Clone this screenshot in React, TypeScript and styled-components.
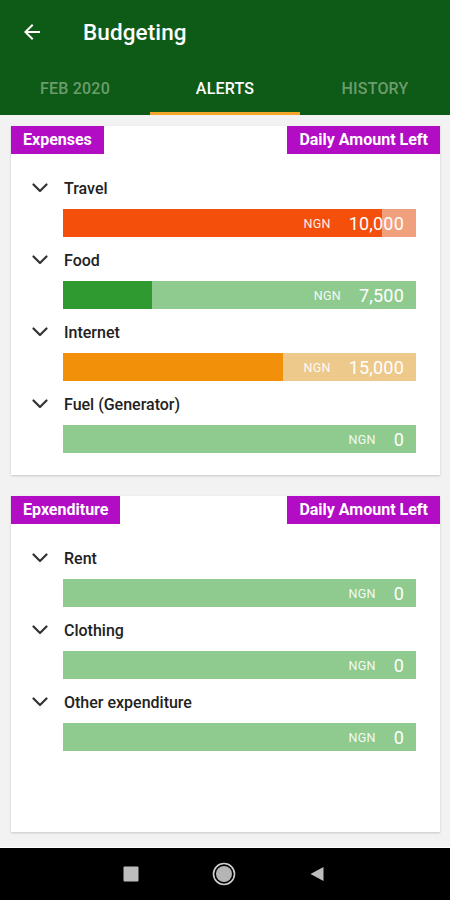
import React from "react";
import styled, { createGlobalStyle } from "styled-components";

const Global = createGlobalStyle`
  html, body { margin: 0; padding: 0; }
  body {
    background: #f2f2f2;
    font-family: Roboto, "Noto Sans", "Liberation Sans", sans-serif;
    -webkit-font-smoothing: antialiased;
  }
`;

const Screen = styled.div`
  display: flex;
  flex-direction: column;
  width: 450px;
  height: 900px;
  background: #f2f2f2;
  overflow: hidden;
`;

const AppBar = styled.header`
  background: #0e5a17;
  display: flex;
  flex-direction: column;
`;

const Toolbar = styled.div`
  height: 64px;
  display: flex;
  align-items: center;
  padding-left: 20px;
  gap: 39px;
`;

const Title = styled.h1`
  margin: 0;
  color: #ffffff;
  font-size: 22.5px;
  font-weight: 500;
  letter-spacing: 0.1px;
`;

const Tabs = styled.nav`
  display: grid;
  grid-template-columns: repeat(3, 1fr);
`;

const Tab = styled.div<{ $active?: boolean }>`
  height: 48px;
  display: flex;
  align-items: center;
  justify-content: center;
  font-size: 16px;
  font-weight: 500;
  letter-spacing: 0.2px;
  color: ${(p) => (p.$active ? "#ffffff" : "#6b9d6c")};
  border-bottom: 3px solid ${(p) => (p.$active ? "#f4a62a" : "transparent")};
`;

const Content = styled.main`
  flex: 1;
  display: flex;
  flex-direction: column;
  gap: 21px;
  padding: 11px 10px 0 11px;
`;

const Card = styled.section<{ $bottom: number }>`
  background: #ffffff;
  box-shadow: 0 1px 2px rgba(0, 0, 0, 0.18);
  padding-bottom: ${(p) => p.$bottom}px;
`;

const CardHeader = styled.div`
  display: flex;
  justify-content: space-between;
  margin-bottom: 22px;
`;

const Badge = styled.div`
  background: #b20dc4;
  color: #ffffff;
  font-size: 16px;
  font-weight: 700;
  height: 28px;
  line-height: 28px;
  padding: 0 12px;
`;

const Rows = styled.div`
  display: flex;
  flex-direction: column;
  gap: 11px;
`;

const Row = styled.div`
  display: flex;
  flex-direction: column;
  gap: 9px;
`;

const RowLabel = styled.div`
  display: flex;
  align-items: center;
  height: 24px;
  padding-left: 21px;
  gap: 16px;
  color: #222222;
  font-size: 16px;
  font-weight: 500;
`;

const Track = styled.div<{ $bg: string }>`
  display: grid;
  height: 28px;
  margin: 0 24px 0 52px;
  background: ${(p) => p.$bg};
`;

const Fill = styled.div<{ $fg: string }>`
  grid-area: 1 / 1;
  height: 100%;
  background: ${(p) => p.$fg};
`;

const Amount = styled.div`
  grid-area: 1 / 1;
  justify-self: end;
  align-self: center;
  display: flex;
  align-items: center;
  gap: 18px;
  padding-right: 12px;
  color: #ffffff;
`;

const Currency = styled.span`
  font-size: 12.5px;
  opacity: 0.9;
  letter-spacing: 0.3px;
`;

const Value = styled.span`
  font-size: 18px;
  letter-spacing: 0.2px;
`;

const NavBar = styled.footer`
  height: 52px;
  flex-shrink: 0;
  background: #000000;
  border-top: 1px solid #ffffff;
  display: flex;
  align-items: center;
  justify-content: center;
  gap: 73px;
  padding-right: 3px;
`;

const Chevron = () => (
  <svg width="16" height="10" viewBox="0 0 16 10" fill="none">
    <path d="M1.5 1.5 L8 8 L14.5 1.5" stroke="#333" strokeWidth="2.2" strokeLinecap="round" strokeLinejoin="round" />
  </svg>
);

const BackArrow = () => (
  <svg width="24" height="24" viewBox="0 0 24 24">
    <path d="M20 11H7.83l5.59-5.59L12 4l-8 8 8 8 1.41-1.41L7.83 13H20v-2z" fill="#ffffff" />
  </svg>
);

type Item = { name: string; value: string; pct: number; fg: string; bg: string };

const GREEN_L = "#8fcb8e";

const expenses: Item[] = [
  { name: "Travel", value: "10,000", pct: 90.4, fg: "#f44f0b", bg: "#f0a07c" },
  { name: "Food", value: "7,500", pct: 25.2, fg: "#2e9a30", bg: GREEN_L },
  { name: "Internet", value: "15,000", pct: 62.3, fg: "#f39009", bg: "#edc98b" },
  { name: "Fuel (Generator)", value: "0", pct: 0, fg: "#2e9a30", bg: GREEN_L },
];

const expenditure: Item[] = [
  { name: "Rent", value: "0", pct: 0, fg: "#2e9a30", bg: GREEN_L },
  { name: "Clothing", value: "0", pct: 0, fg: "#2e9a30", bg: GREEN_L },
  { name: "Other expenditure", value: "0", pct: 0, fg: "#2e9a30", bg: GREEN_L },
];

const BudgetRow = ({ item }: { item: Item }) => (
  <Row>
    <RowLabel>
      <Chevron />
      {item.name}
    </RowLabel>
    <Track $bg={item.bg}>
      <Fill $fg={item.fg} style={{ width: `${item.pct}%` }} />
      <Amount>
        <Currency>NGN</Currency>
        <Value>{item.value}</Value>
      </Amount>
    </Track>
  </Row>
);

const BudgetCard = ({ title, items, bottom }: { title: string; items: Item[]; bottom: number }) => (
  <Card $bottom={bottom}>
    <CardHeader>
      <Badge>{title}</Badge>
      <Badge>Daily Amount Left</Badge>
    </CardHeader>
    <Rows>
      {items.map((it) => (
        <BudgetRow key={it.name} item={it} />
      ))}
    </Rows>
  </Card>
);

export default function App() {
  return (
    <>
      <Global />
      <Screen>
        <AppBar>
          <Toolbar>
            <BackArrow />
            <Title>Budgeting</Title>
          </Toolbar>
          <Tabs>
            <Tab>FEB 2020</Tab>
            <Tab $active>ALERTS</Tab>
            <Tab>HISTORY</Tab>
          </Tabs>
        </AppBar>
        <Content>
          <BudgetCard title="Expenses" items={expenses} bottom={22} />
          <BudgetCard title="Epxenditure" items={expenditure} bottom={81} />
        </Content>
        <NavBar>
          <svg width="16" height="16" viewBox="0 0 16 16">
            <rect x="0.5" y="0.5" width="15" height="15" rx="1" fill="#bdbdbd" />
          </svg>
          <svg width="24" height="24" viewBox="0 0 24 24">
            <circle cx="12" cy="12" r="10.5" fill="none" stroke="#cfcfcf" strokeWidth="1.6" />
            <circle cx="12" cy="12" r="8" fill="#b5b5b5" />
          </svg>
          <svg width="16" height="16" viewBox="0 0 16 16">
            <path d="M14.5 1 L14.5 15 L1.5 8 Z" fill="#bdbdbd" />
          </svg>
        </NavBar>
      </Screen>
    </>
  );
}
